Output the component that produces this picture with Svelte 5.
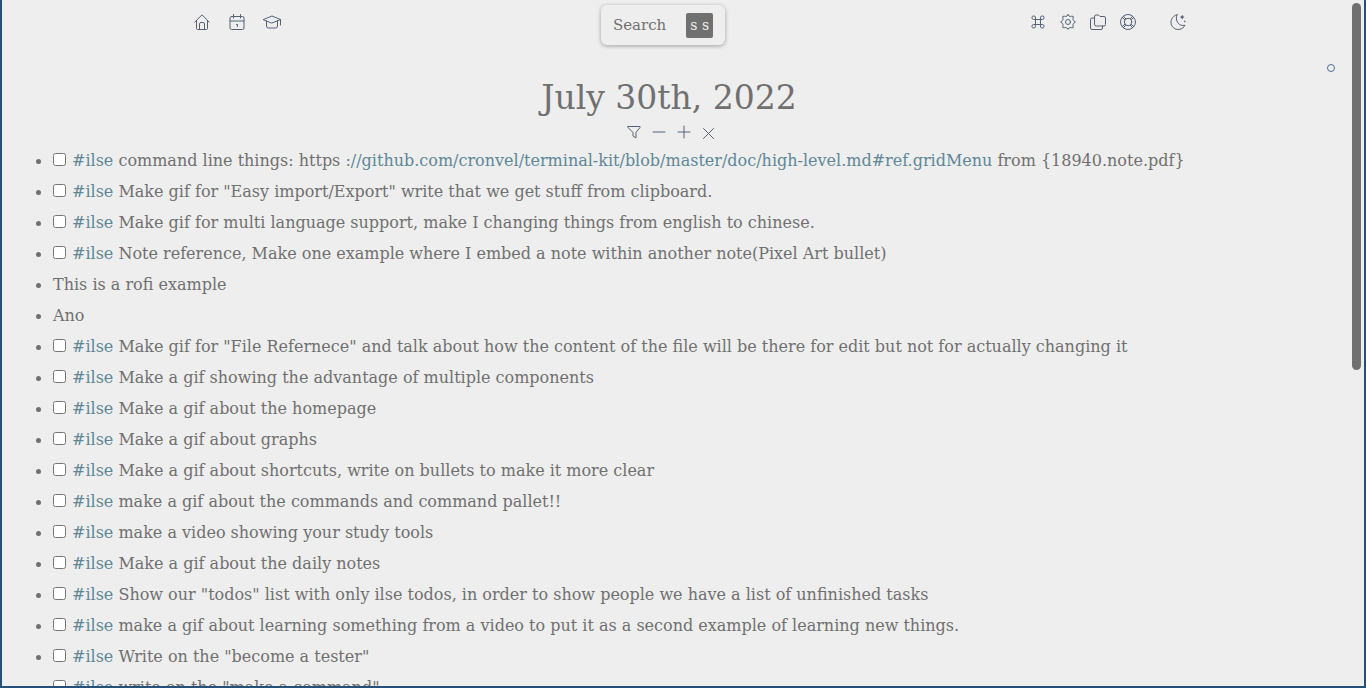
<script>
  const link = '://github.com/cronvel/terminal-kit/blob/master/doc/high-level.md#ref.gridMenu';
  const notes = [
    { todo: true, text: 'command line things: https ', link, after: ' from {18940.note.pdf}' },
    { todo: true, text: 'Make gif for "Easy import/Export" write that we get stuff from clipboard.' },
    { todo: true, text: 'Make gif for multi language support, make I changing things from english to chinese.' },
    { todo: true, text: 'Note reference, Make one example where I embed a note within another note(Pixel Art bullet)' },
    { text: 'This is a rofi example' },
    { text: 'Ano' },
    { todo: true, text: 'Make gif for "File Refernece" and talk about how the content of the file will be there for edit but not for actually changing it' },
    { todo: true, text: 'Make a gif showing the advantage of multiple components' },
    { todo: true, text: 'Make a gif about the homepage' },
    { todo: true, text: 'Make a gif about graphs' },
    { todo: true, text: 'Make a gif about shortcuts, write on bullets to make it more clear' },
    { todo: true, text: 'make a gif about the commands and command pallet!!' },
    { todo: true, text: 'make a video showing your study tools' },
    { todo: true, text: 'Make a gif about the daily notes' },
    { todo: true, text: 'Show our "todos" list with only ilse todos, in order to show people we have a list of unfinished tasks' },
    { todo: true, text: 'make a gif about learning something from a video to put it as a second example of learning new things.' },
    { todo: true, text: 'Write on the "become a tester"' },
    { todo: true, text: 'write on the "make a command"' }
  ];
</script>

<div class="frame">
  <header>
    <nav class="left" aria-label="Pages">
      <button aria-label="Home"><svg viewBox="0 0 16 16"><path d="M.7 8.2 8 .8l7.3 7.4M2.5 6.5v8q0 1 1 1h9q1 0 1-1v-8M5.500 15.500V10q0-1.500 1.500-1.500h2q1.500 0 1.500 1.500v5.500" /></svg></button>
      <button aria-label="Daily note"><svg viewBox="0 0 16 16"><rect x="1" y="2.500" width="14" height="13" rx="1.500" /><path d="M1 7h14M4.500.5v3.500M11.500.5v3.500M7.500 10.500h1V12.500" /></svg></button>
      <button class="wide" aria-label="Study"><svg viewBox="0 0 20 16"><path d="M1.500 5.500 10 2l8.500 3.500L10 9ZM4.500 7v5q0 2 2 2h7q2 0 2-2V7M18.500 5.500V11" /></svg></button>
    </nav>
    <button class="search">Search <kbd>s s</kbd></button>
    <nav class="right" aria-label="Tools">
      <button aria-label="Commands"><svg viewBox="0 0 16 16"><path d="M5.500 5.500V4A1.800 1.800 0 1 0 3.700 5.500h8.600A1.800 1.800 0 1 0 10.500 4v8a1.800 1.800 0 1 0 1.800-1.500H3.700A1.800 1.800 0 1 0 5.500 12Z" /></svg></button>
      <button aria-label="Settings"><svg viewBox="0 0 16 16"><circle cx="8" cy="8" r="2.500" /><path d="M8 .6q1 1.900 2.200 1.900 1.300-.5 2.900-.1.300 1.800-.2 2.900.6 1.500 2.500 2.700-1.900 1.200-2.500 2.700.5 1.200.2 2.900-1.600.400-2.900-.1Q9 13.500 8 15.400 7 13.500 5.800 13.500q-1.300.500-2.900.1-.3-1.800.2-2.900Q2.500 9.200.6 8 2.500 6.800 3.100 5.300q-.5-1.200-.2-2.900 1.600-.4 2.900.1Q7 2.500 8 .6Z" /></svg></button>
      <button aria-label="Files"><svg viewBox="0 0 16 16"><path d="M4.500 2.500q0-1.500 1.500-1.500h2.500l1.500 1.500h4q1.500 0 1.500 1.500v6.500q0 1.500-1.500 1.500H6q-1.500 0-1.500-1.500ZM4.500 4H2Q.5 4 .5 5.500V14q0 1.500 1.500 1.500h9q1.500 0 1.500-1.500v-2" /></svg></button>
      <button aria-label="Help"><svg viewBox="0 0 16 16"><circle cx="8" cy="8" r="7.500" /><circle cx="8" cy="8" r="3.700" /><path d="m2.300 3.500 2.500 2.200M3.500 2.300l2.200 2.500M13.700 3.500l-2.500 2.200M12.500 2.300l-2.200 2.500M2.300 12.500l2.500-2.200M3.500 13.700l2.200-2.500M13.700 12.500l-2.500-2.200M12.500 13.700l-2.200-2.500" /></svg></button>
      <button class="theme" aria-label="Dark theme"><svg viewBox="0 0 16 16"><path d="M7 .8a7.400 7.400 0 1 0 8 10.400C9 13 4.500 6.500 7 .8Z" /><path class="solid" d="m12.200 .8.8 1.500 1.500.8-1.500.8-.8 1.500-.8-1.500-1.500-.8 1.500-.8ZM14.800 6l.4 1 .8.400-.8.4-.4 1-.4-1-.8-.4.800-.4Z" /></svg></button>
    </nav>
  </header>

  <main>
    <h1>July 30th, 2022</h1>
    <div class="tools">
      <button aria-label="Filter"><svg viewBox="0 0 14 14"><path d="M1 1.500h12v1L9 7.500v5.500l-3-2V7.500L1 2.500Z" /></svg></button>
      <button aria-label="Collapse"><svg viewBox="0 0 14 14"><path d="M1 7h12" /></svg></button>
      <button aria-label="Expand"><svg viewBox="0 0 14 14"><path d="M1 7h12M7 1v12" /></svg></button>
      <button aria-label="Close"><svg viewBox="0 0 14 14"><path d="m1.500 3.500 10 10M11.500 3.500l-10 10" /></svg></button>
    </div>
    <ul>
      {#each notes as note, i}
        <li>
          {#if note.todo}<input type="checkbox" id="todo-{i}" aria-label={note.text} /><a class="tag" href="#ilse">#ilse</a>{/if}
          <span>{note.text}{#if note.link}<a href={'https' + note.link}>{note.link}</a>{note.after}{/if}</span>
        </li>
      {/each}
    </ul>
  </main>
  <div class="marker"></div>
  <div class="thumb"></div>
</div>

<style>
  :global(body) { background: #eee; }
  .frame {
    position: relative;
    box-sizing: border-box;
    height: 100vh;
    overflow: hidden;
    border: 2px solid #255078;
    border-top: 0;
    background: #eee;
    color: #707070;
    font: 16px/31px "DejaVu Serif", serif;
  }
  button {
    display: flex;
    padding: 0;
    border: 0;
    background: none;
    color: #566176;
    font: inherit;
    cursor: pointer;
  }
  svg {
    width: 16px;
    height: 16px;
    fill: none;
    stroke: currentColor;
    stroke-width: 1;
    stroke-linejoin: round;
    stroke-linecap: round;
  }
  .wide svg { width: 20px; }
  .solid { fill: currentColor; stroke-width: 0; }
  header {
    display: grid;
    grid-template-columns: 1fr auto 1fr;
    padding: 5px 40px 0 0;
  }
  nav { display: flex; align-items: flex-start; padding-top: 9px; }
  .left { gap: 19px; padding-left: 32%; }
  .wide { margin-left: -2px; }
  .right { gap: 14px; justify-content: flex-end; padding-right: 23%; }
  .theme { margin-left: 20px; }
  .search {
    align-items: center;
    gap: 20px;
    height: 40px;
    padding: 0 12px;
    border-radius: 6px;
    color: #707070;
    font-size: 15px;
    box-shadow: 0 1px 4px #0005;
  }
  kbd {
    padding: 0 4px;
    border-radius: 2px;
    background: #707070;
    color: #eee;
    font: 14px/25px "DejaVu Serif", serif;
  }
  h1 {
    margin: 31px 0 0;
    font-size: 33px;
    line-height: 44px;
    font-weight: 400;
    text-align: center;
  }
  h1, .tools { padding-right: 28px; }
  .tools { display: flex; justify-content: center; gap: 11px; padding-top: 5px; padding-bottom: 6px; padding-left: 4px; }
  .tools svg { width: 14px; height: 14px; }
  ul { margin: 0; padding: 0 0 0 51px; list-style: disc; }
  li { padding: 0; white-space: nowrap; }
  li::marker { font-size: 17px; }
  input {
    width: 13px;
    height: 13px;
    margin: 0 6px 0 0;
    vertical-align: 0;
  }
  a { color: #5e8797; text-decoration: none; }
  .marker {
    position: absolute;
    top: 64px;
    right: 29px;
    width: 6px;
    height: 6px;
    border: 1px solid #4c6a91;
    border-radius: 50%;
  }
  .thumb {
    position: absolute;
    top: 3px;
    right: 3px;
    width: 9px;
    height: 367px;
    border-radius: 5px;
    background: #707070;
  }
</style>
